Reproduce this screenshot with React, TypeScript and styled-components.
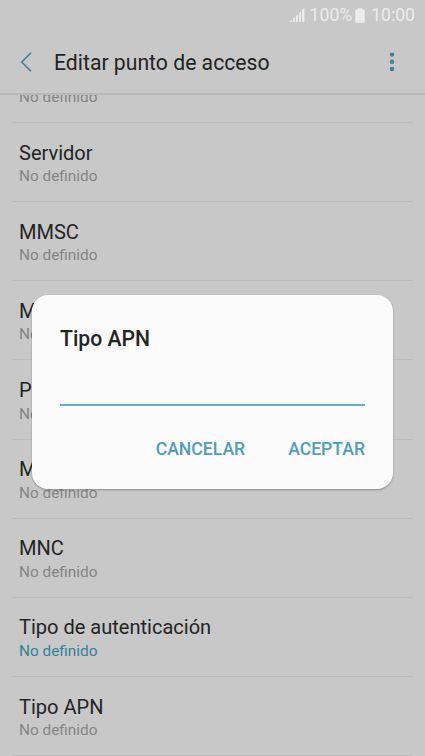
import React from "react";
import styled, { createGlobalStyle } from "styled-components";

const GlobalStyle = createGlobalStyle`
  * { box-sizing: border-box; }
  html, body { margin: 0; padding: 0; }
  body { background: #c8c8c8; font-family: Roboto, "Liberation Sans", sans-serif; }
`;

const Screen = styled.main`
  position: relative;
  display: flex;
  flex-direction: column;
  width: 425px;
  height: 756px;
  overflow: hidden;
  background: #c8c8c8;
  color: #242424;
`;

const StatusBar = styled.div`
  flex: none;
  display: flex;
  align-items: center;
  justify-content: flex-end;
  height: 31px;
  padding-right: 10px;
  font-size: 17.6px;
  line-height: 31px;
  color: #ececec;
`;

const SignalIcon = styled.svg`
  width: 15px;
  height: 15px;
  margin-right: 5px;
`;

const BatteryIcon = styled.svg`
  width: 10px;
  height: 15px;
  margin: -1px 6px 0 3px;
`;

const Header = styled.header`
  flex: none;
  display: flex;
  align-items: center;
  height: 64px;
  padding: 0 28px 0 20px;
  border-bottom: 2px solid #b8b8b8;
`;

const IconButton = styled.button`
  display: flex;
  padding: 0 0 1px;
  border: 0;
  background: none;
  color: #3f7f98;
`;

const HeaderTitle = styled.h1`
  flex: 1;
  margin: 0 0 0 22px;
  padding-top: 2px;
  font-size: 21.2px;
  font-weight: 400;
  line-height: 30px;
`;

const Viewport = styled.div`
  flex: 1;
  min-height: 0;
  overflow: hidden;
`;

const SettingList = styled.ul`
  margin: -51.2px 12px 0;
  padding: 0;
  list-style: none;
`;

const Setting = styled.li`
  height: 79.15px;
  padding: 16.6px 7px 0;
  border-bottom: 1px solid #bcbcbc;
`;

const SettingName = styled.div`
  height: 26.6px;
  font-size: 20.05px;
  line-height: 26px;
`;

const SettingValue = styled.div<{ $accent?: boolean }>`
  height: 20px;
  font-size: 15.35px;
  line-height: 20px;
  color: ${(p) => (p.$accent ? "#37809b" : "#858585")};
`;

const Dialog = styled.section`
  position: absolute;
  top: 295px;
  left: 32px;
  width: 361px;
  height: 194px;
  display: flex;
  flex-direction: column;
  padding: 29px 28px 0;
  border-radius: 16px;
  background: #fbfbfb;
  box-shadow: 0 1px 2px rgba(0, 0, 0, 0.32);
`;

const DialogTitle = styled.h2`
  margin: 0;
  font-size: 21.2px;
  font-weight: 500;
  line-height: 30px;
`;

const TextField = styled.input`
  width: 100%;
  height: 38px;
  margin-top: 14px;
  padding: 0;
  border: 0;
  border-bottom: 2px solid #63b1cb;
  border-radius: 0;
  outline: 0;
  background: transparent;
  font: 400 20px Roboto, sans-serif;
`;

const Actions = styled.div`
  display: flex;
  justify-content: flex-end;
  gap: 43px;
  margin-top: 31px;
`;

const ActionButton = styled.button`
  padding: 0;
  border: 0;
  background: none;
  color: #509dba;
  font: 500 17.6px/24px Roboto, sans-serif;
`;

const settings: { name: string; accent?: boolean }[] = [
  { name: "Contraseña" },
  { name: "Servidor" },
  { name: "MMSC" },
  { name: "MMS proxy" },
  { name: "Puerto MMS" },
  { name: "MCC" },
  { name: "MNC" },
  { name: "Tipo de autenticación", accent: true },
  { name: "Tipo APN" },
];

export default function App() {
  return (
    <>
      <GlobalStyle />
      <Screen>
        <StatusBar>
          <SignalIcon viewBox="0 0 15 15" fill="currentColor" aria-hidden="true">
            <path d="M0 14V12.9L2 11.4V14ZM3 14V10.6L5 8.9V14ZM6 14V8L8 6.2V14ZM9 14V4.9L11 3.2V14ZM12 14V2L14.4 0V14Z" />
          </SignalIcon>
          <span>100%</span>
          <BatteryIcon viewBox="0 0 10 15" fill="currentColor" aria-hidden="true">
            <path d="M2.5 1.4V.3h5v1.1h1.2q1 0 1 1v11.4q0 1-1 1H1.3q-1 0-1-1V2.4q0-1 1-1Z" />
          </BatteryIcon>
          <span>10:00</span>
        </StatusBar>
        <Header>
          <IconButton aria-label="Atrás">
            <svg width="12" height="20" viewBox="0 0 12 20" fill="none" stroke="currentColor" strokeWidth="1.6">
              <path d="M11 .8 1.8 10 11 19.2" />
            </svg>
          </IconButton>
          <HeaderTitle>Editar punto de acceso</HeaderTitle>
          <IconButton aria-label="Más opciones">
            <svg width="10" height="20" viewBox="0 0 10 20" fill="currentColor">
              <circle cx="5" cy="2.6" r="2.2" />
              <circle cx="5" cy="9.8" r="2.2" />
              <circle cx="5" cy="17" r="2.2" />
            </svg>
          </IconButton>
        </Header>
        <Viewport>
          <SettingList>
            {settings.map(({ name, accent }) => (
              <Setting key={name}>
                <SettingName>{name}</SettingName>
                <SettingValue $accent={accent}>No definido</SettingValue>
              </Setting>
            ))}
          </SettingList>
        </Viewport>
        <Dialog role="dialog" aria-label="Tipo APN">
          <DialogTitle>Tipo APN</DialogTitle>
          <TextField aria-label="Tipo APN" />
          <Actions>
            <ActionButton>CANCELAR</ActionButton>
            <ActionButton>ACEPTAR</ActionButton>
          </Actions>
        </Dialog>
      </Screen>
    </>
  );
}
